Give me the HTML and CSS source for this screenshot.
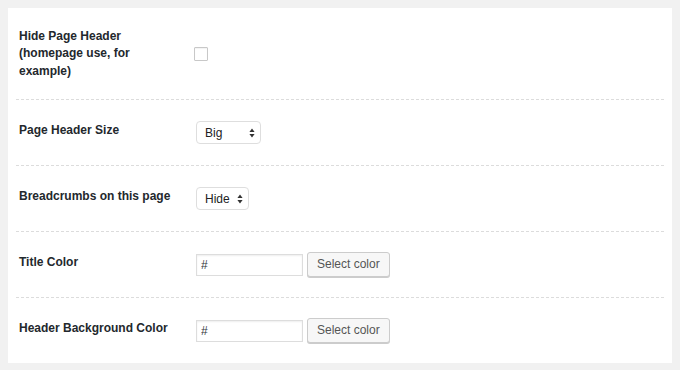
FILE: index.html
```html
<!DOCTYPE html>
<html lang="en">
<head>
  <meta charset="UTF-8">
  <meta name="viewport" content="width=device-width, initial-scale=1.0">
  <title>Page Options</title>
  <link rel="stylesheet" href="styles.css">
</head>
<body>
  <div class="panel">
    <div class="row row-center">
      <label class="label" for="hideHeader">Hide Page Header (homepage use, for example)</label>
      <div class="field">
        <input type="checkbox" id="hideHeader" class="check">
      </div>
    </div>

    <div class="row">
      <label class="label" for="headerSize">Page Header Size</label>
      <div class="field">
        <span class="select big">
          <select id="headerSize">
            <option>Big</option>
            <option>Small</option>
          </select>
          <svg class="arrows" width="6" height="10" viewBox="0 0 6 10"><path d="M3 0.5 L5.6 4 H0.4 Z M3 9.5 L5.6 6 H0.4 Z" fill="#333"/></svg>
        </span>
      </div>
    </div>

    <div class="row">
      <label class="label" for="breadcrumbs">Breadcrumbs on this page</label>
      <div class="field">
        <span class="select hide">
          <select id="breadcrumbs">
            <option>Hide</option>
            <option>Show</option>
          </select>
          <svg class="arrows" width="6" height="10" viewBox="0 0 6 10"><path d="M3 0.5 L5.6 4 H0.4 Z M3 9.5 L5.6 6 H0.4 Z" fill="#333"/></svg>
        </span>
      </div>
    </div>

    <div class="row">
      <label class="label" for="titleColor">Title Color</label>
      <div class="field">
        <input type="text" id="titleColor" class="color-input" value="#">
        <button class="color-btn">Select color</button>
      </div>
    </div>

    <div class="row">
      <label class="label" for="bgColor">Header Background Color</label>
      <div class="field">
        <input type="text" id="bgColor" class="color-input" value="#">
        <button class="color-btn">Select color</button>
      </div>
    </div>
  </div>
</body>
</html>
```

FILE: styles.css
```css
* { box-sizing: border-box; }
body {
  margin: 0;
  padding: 8px;
  background: #f1f1f1;
  font-family: "Liberation Sans", Arial, sans-serif;
  color: #23282d;
}
.panel {
  background: #fff;
  padding: 0 8px;
}
.row {
  display: flex;
  align-items: flex-start;
  padding: 20px 0;
  border-top: 1px dashed #dcdcdc;
}
.row:first-child {
  border-top: none;
  padding-bottom: 19px;
}
.row-center { align-items: center; }
.label {
  width: 180px;
  flex: none;
  padding: 2px 22px 0 3px;
  font-size: 12px;
  font-weight: bold;
  line-height: 17.4px;
}
.row-center .label { padding-top: 0; }
.field {
  display: flex;
  align-items: center;
  gap: 4px;
  height: 25px;
}
.check {
  -webkit-appearance: none;
  appearance: none;
  width: 14px;
  height: 14px;
  margin: 0 0 0 -2px;
  border: 1px solid #c8c8c8;
  border-radius: 1px;
  background: #fff;
  box-shadow: inset 0 1px 1px rgba(0,0,0,.05);
}
.select {
  position: relative;
  display: inline-block;
  height: 23px;
}
.select select {
  -webkit-appearance: none;
  appearance: none;
  height: 23px;
  margin: 0;
  padding: 0 0 0 8px;
  border: 1px solid #dedede;
  border-radius: 4px;
  background: #fff;
  font-family: "Liberation Sans", Arial, sans-serif;
  font-size: 12px;
  color: #222;
}
.big select { width: 65px; }
.hide select { width: 53px; }
.arrows {
  position: absolute;
  right: 6px;
  top: 7px;
  pointer-events: none;
}
.color-input {
  width: 107px;
  height: 22px;
  margin: 0;
  padding: 0 4px;
  border: 1px solid #ddd;
  background: #fff;
  box-shadow: inset 0 1px 2px rgba(0,0,0,.07);
  font-family: "Liberation Sans", Arial, sans-serif;
  font-size: 12px;
  color: #32373c;
}
.color-btn {
  height: 25px;
  margin: 0;
  padding: 0 9px 1px;
  white-space: nowrap;
  border: 1px solid #cccccc;
  border-radius: 3px;
  background: #f7f7f7;
  box-shadow: 0 1px 0 #cccccc;
  font-family: "Liberation Sans", Arial, sans-serif;
  font-size: 12px;
  color: #555;
}
```
